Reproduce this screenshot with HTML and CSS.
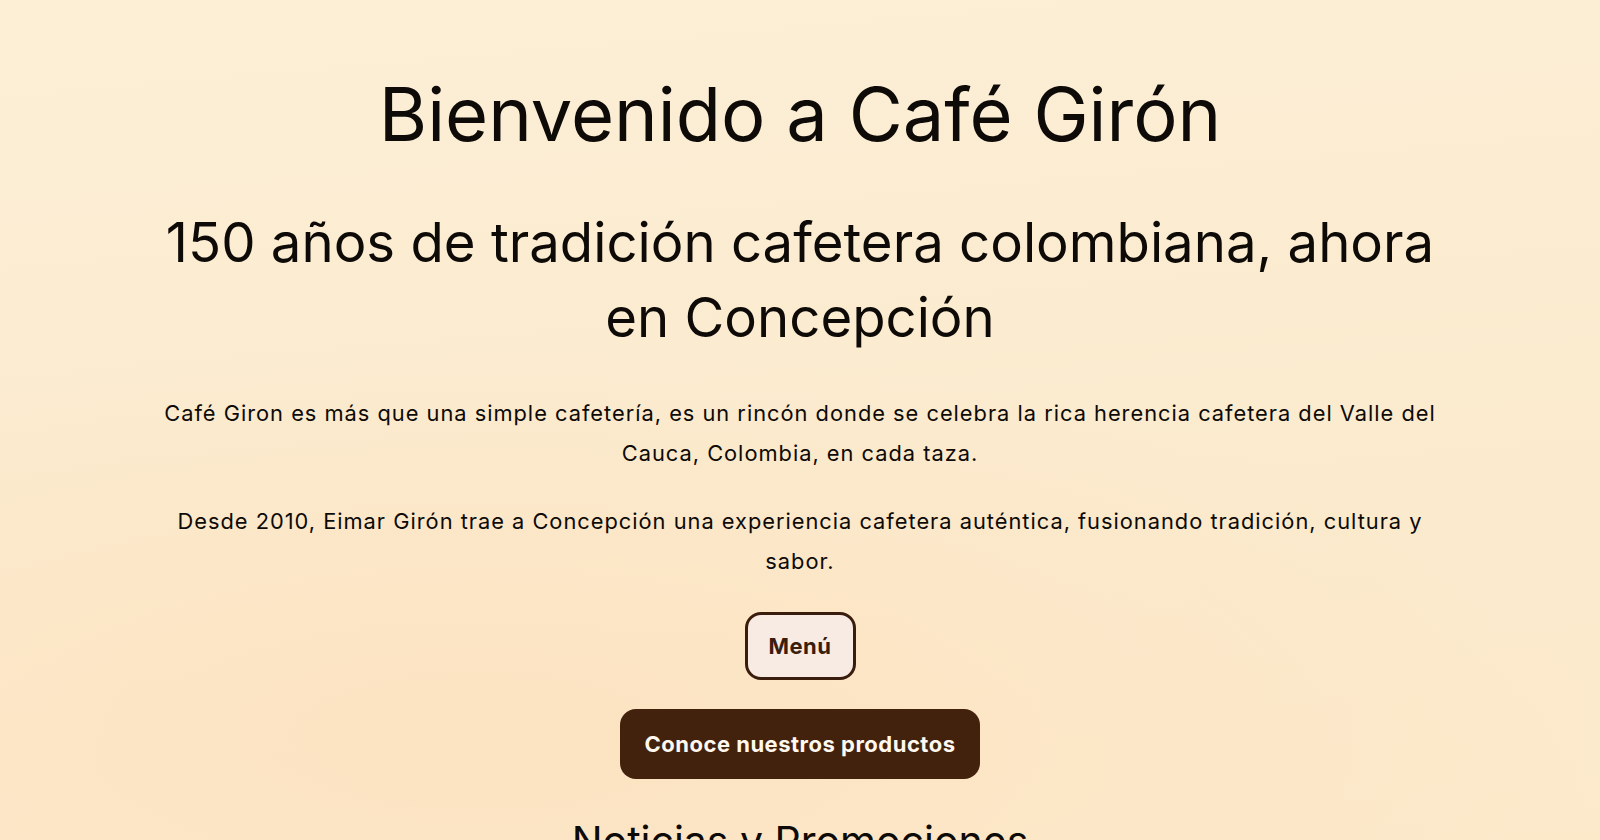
FILE: index.html
```html
<!DOCTYPE html>
<html lang="es">
<head>
<meta charset="utf-8">
<title>Café Girón</title>
<link rel="stylesheet" href="styles.css">
</head>
<body>
<main class="hero">
  <h1 class="title">Bienvenido a Café Girón</h1>
  <h2 class="subtitle">150 años de tradición cafetera colombiana, ahora en Concepción</h2>
  <p class="text">Café Giron es más que una simple cafetería, es un rincón donde se celebra la rica herencia cafetera del Valle del Cauca, Colombia, en cada taza.</p>
  <p class="text text-second">Desde 2010, Eimar Girón trae a Concepción una experiencia cafetera auténtica, fusionando tradición, cultura y sabor.</p>
  <div class="actions">
    <a class="btn btn-outline" href="#">Menú</a>
    <a class="btn btn-dark" href="#">Conoce nuestros productos</a>
  </div>
  <h2 class="section-title">Noticias y Promociones</h2>
</main>
</body>
</html>
```
FILE: styles.css
```css
html, body {
  margin: 0;
  padding: 0;
}
body {
  min-height: 100vh;
  background:
    radial-gradient(ellipse 70% 45% at 30% 85%, rgba(252, 226, 192, 0.9) 0%, rgba(252, 226, 192, 0) 100%),
    linear-gradient(175deg, #fcefd6 0%, #fbebcf 50%, #fbe9ca 100%);
  font-family: Inter, "Noto Sans", sans-serif;
  color: #0d0a07;
  overflow: hidden;
}
.hero {
  max-width: 1296px;
  margin: 0 auto;
  padding: 67px 0 0;
  text-align: center;
}
.title {
  font-size: 74px;
  font-weight: 400;
  line-height: 94px;
  margin: 0;
}
.subtitle {
  font-size: 54.5px;
  font-weight: 400;
  line-height: 75px;
  margin: 44px 0 0;
}
.text {
  font-size: 21.8px;
  line-height: 40px;
  margin: 38px 0 0;
  letter-spacing: 1px;
}
.text-second {
  margin-top: 28px;
}
.actions {
  display: flex;
  flex-direction: column;
  align-items: center;
  gap: 29px;
  margin-top: 31px;
}
.btn {
  display: inline-flex;
  align-items: center;
  justify-content: center;
  box-sizing: border-box;
  border-radius: 16px;
  font-size: 22px;
  font-weight: 700;
  text-decoration: none;
  letter-spacing: 0.5px;
}
.btn-outline {
  background: #f8ebe4;
  color: #3a1d0c;
  border: 3px solid #3a1d0c;
  height: 68px;
  padding: 0 21px;
}
.btn-dark {
  background: #43220d;
  color: #fff8ef;
  height: 70px;
  padding: 0 25px;
}
.section-title {
  font-size: 41px;
  font-weight: 400;
  line-height: 1.2;
  margin: 38px 0 0;
}
```
